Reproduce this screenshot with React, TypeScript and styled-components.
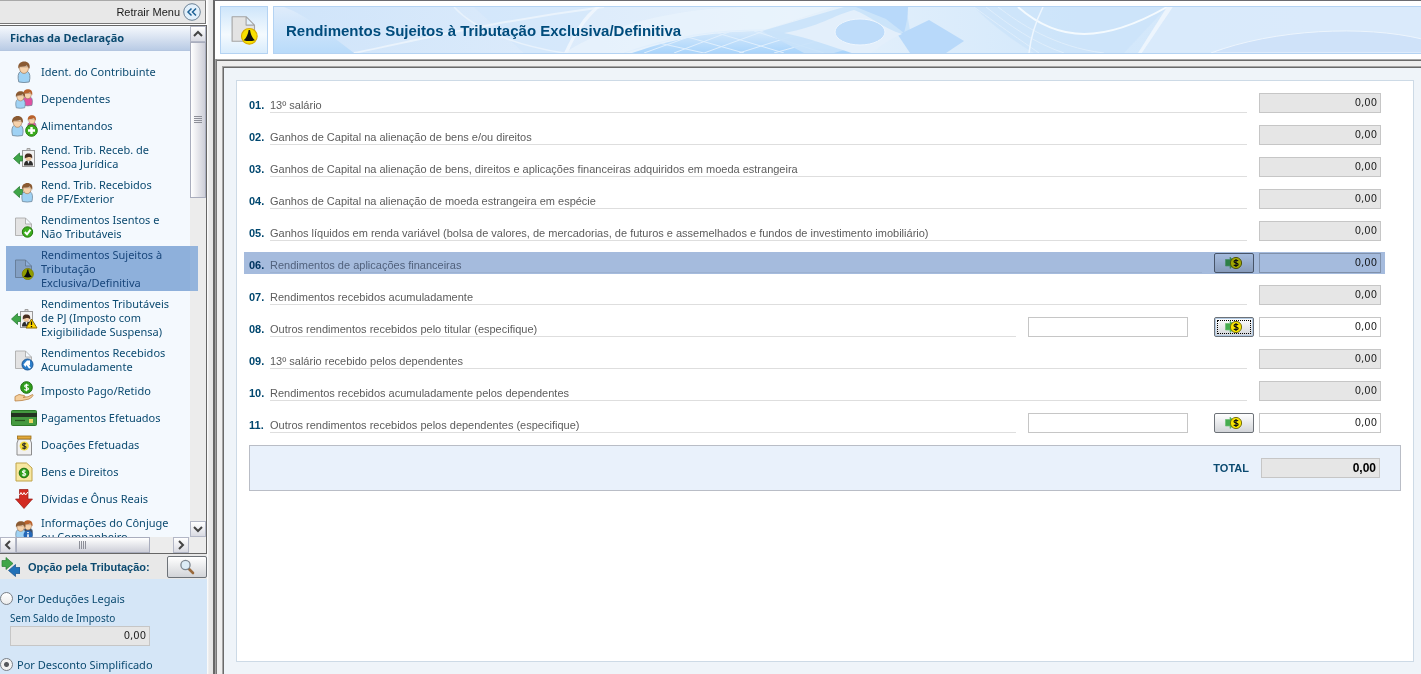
import React, { useState } from "react";
import styled, { createGlobalStyle, css } from "styled-components";

const GlobalStyle = createGlobalStyle`
  * { box-sizing: border-box; }
  body { margin: 0; background: #eeeeee; font-family: "Noto Sans", sans-serif; font-size: 11px; color: #0b4a70; }
  button { padding: 0; font: inherit; cursor: pointer; }
`;

const arial = `"Liberation Sans", Arial, sans-serif`;

/* ---------- shell ---------- */

const Page = styled.div`
  display: flex;
  height: 100vh;
  overflow: hidden;
`;

const Sidebar = styled.aside`
  flex: none;
  width: 207px;
  display: flex;
  flex-direction: column;
  background: #ffffff;
`;

const Splitter = styled.div`
  flex: none;
  width: 6px;
  background: linear-gradient(90deg, #ffffff 0, #e9e9e9 2px, #e4e4e4 100%);
`;

const Main = styled.main`
  flex: 1;
  min-width: 0;
  display: flex;
  flex-direction: column;
  border-top: 1px solid #6b6b70;
  border-left: 2px solid #666666;
  background: #a0a0a0;
`;

/* ---------- sidebar top ---------- */

const TopBar = styled.div`
  flex: none;
  height: 24px;
  margin-right: 1px;
  display: flex;
  align-items: center;
  justify-content: flex-end;
  border: 1px solid #777777;
  border-top-color: #a9a9a9;
  border-left: 0;
  background: #e8e8e8;
`;

const CollapseButton = styled.button`
  display: flex;
  align-items: center;
  gap: 3px;
  padding-right: 4px;
  border: 0;
  background: none;
  color: #1a1a1a;
  font-family: ${arial};
`;

const FormsPanel = styled.section`
  flex: 1;
  min-height: 0;
  margin-top: 1px;
  display: grid;
  grid-template-columns: minmax(0, 1fr) 16px;
  grid-template-rows: minmax(0, 1fr) 16px;
  border-top: 1px solid #666666;
  border-right: 1px solid #666666;
  border-bottom: 1px solid #666666;
  background: #ececec;
`;

const FormsView = styled.nav`
  position: relative;
  z-index: 1;
  overflow-x: visible;
  overflow-y: clip;
  background: #f4f9fe;
`;

const FormsTitle = styled.h2`
  margin: 0;
  height: 25px;
  padding-left: 10px;
  line-height: 24px;
  font-size: 11px;
  font-weight: 700;
  border-bottom: 1px solid #b4c6e0;
  background: linear-gradient(#f6f9fd, #b9cbe5);
`;

const FormsList = styled.ul`
  list-style: none;
  margin: 0;
  padding: 9px 0 0 6px;
  display: flex;
  flex-direction: column;
  gap: 4px;
`;

const FormsLink = styled.a`
  display: flex;
  align-items: center;
  gap: 3px;
  min-height: 20px;
  line-height: 14px;
  color: #0b4a70;
  text-decoration: none;
  white-space: pre-line;
`;

const FormsItem = styled.li<{ $active?: boolean }>`
  position: relative;
  padding: 2px 0 1px 4px;
  ${(p) =>
    p.$active &&
    css`
      ${FormsLink} { color: #2a6490; }
      &::after {
        content: "";
        position: absolute;
        inset: 0 -8px 0 0;
        background: #94b4dc;
        mix-blend-mode: multiply;
        pointer-events: none;
      }
    `}
`;

const IconSlot = styled.span`
  flex: none;
  width: 28px;
  height: 20px;
  display: flex;
  align-items: center;
  justify-content: center;
  svg { flex: none; }
`;

/* ---------- scrollbars ---------- */

const ScrollTrack = styled.div<{ $horizontal?: boolean }>`
  display: flex;
  flex-direction: ${(p) => (p.$horizontal ? "row" : "column")};
  padding-right: ${(p) => (p.$horizontal ? "1px" : "0")};
  background: #ececec;
`;

const ScrollButton = styled.button`
  flex: none;
  width: 16px;
  height: 16px;
  display: grid;
  place-items: center;
  border: 1px solid #b3b7c6;
  background: linear-gradient(#ffffff, #d9dae2);
`;

const ScrollThumb = styled.div<{ $horizontal?: boolean }>`
  flex: ${(p) => (p.$horizontal ? "0 0 71%" : "0 0 156px")};
  display: grid;
  place-items: center;
  border: 1px solid #a9adbd;
  background: linear-gradient(${(p) => (p.$horizontal ? "180deg" : "90deg")}, #ffffff, #cdced8);
`;

const ScrollGap = styled.div`
  flex: 1;
`;

/* ---------- taxation option ---------- */

const TaxHeader = styled.div`
  flex: none;
  height: 25px;
  display: flex;
  align-items: center;
  background: #e8e8e8;
`;

const TaxTitle = styled.h2`
  flex: 1;
  margin: 0;
  padding-left: 8px;
  font-family: ${arial};
  font-size: 11px;
  font-weight: 700;
`;

const ToolButton = styled.button<{ $focused?: boolean }>`
  flex: none;
  width: 40px;
  height: ${(p) => (p.$focused === undefined ? "22px" : "20px")};
  display: grid;
  place-items: center;
  border: 1px solid #6d7278;
  border-radius: 2px;
  background: linear-gradient(#ffffff, #d2d4d8);
  ${(p) =>
    p.$focused &&
    css`
      box-shadow: inset 0 0 0 1px #b4cbe4;
      outline: 1px dotted #000000;
      outline-offset: -4px;
    `}
`;

const TaxBody = styled.div`
  flex: none;
  display: flex;
  flex-direction: column;
  padding: 11px 0 2px;
  background: #d5e6f7;
`;

const RadioRow = styled.label`
  display: flex;
  align-items: center;
  gap: 4px;
  height: 16px;
`;

const Radio = styled.input`
  appearance: none;
  flex: none;
  width: 13px;
  height: 13px;
  margin: 0;
  border: 1px solid #7b8087;
  border-radius: 50%;
  background: linear-gradient(#ffffff, #ececec);
  &:checked {
    background: radial-gradient(circle, #55585c 0 2px, #f2f2f2 3px);
  }
`;

const BalanceField = styled.div`
  display: flex;
  flex-direction: column;
  margin: 5px 0 10px 10px;
  label { height: 15px; line-height: 14px; font-size: 10px; }
`;

/* ---------- form fields ---------- */

const Amount = styled.input<{ $w: number; $total?: boolean; $tint?: boolean }>`
  flex: none;
  width: ${(p) => p.$w}px;
  height: 20px;
  margin: 0;
  padding: 0 3px 1px;
  border: 1px solid #c6c6c6;
  border-radius: 0;
  outline: none;
  background: ${(p) => (p.readOnly && !p.$tint ? "#e6e6e6" : "#ffffff")};
  color: ${(p) => (p.$total ? "#000000" : "#1e1e1e")};
  font-family: "DejaVu Sans", sans-serif;
  font-size: 10px;
  text-align: right;
  ${(p) =>
    p.$total &&
    css`
      font-family: ${arial};
      font-size: 12px;
      font-weight: 700;
    `}
`;

const Describe = styled.input`
  flex: none;
  width: 160px;
  height: 20px;
  margin: 0 14px 0 0;
  padding: 0 3px;
  border: 1px solid #c6c6c6;
  outline: none;
  background: #ffffff;
  font: inherit;
`;

/* ---------- main area ---------- */

const Header = styled.header`
  flex: none;
  display: flex;
  gap: 5px;
  padding: 5px 0 5px 5px;
  background: #ffffff;
`;

const HeaderIcon = styled.div`
  flex: none;
  width: 48px;
  height: 48px;
  display: grid;
  place-items: center;
  border: 1px solid #b4d3f3;
  background: linear-gradient(#cfe6fb, #f4fafe 60%, #d9ecfc);
`;

const Banner = styled.div`
  position: relative;
  flex: 1;
  min-width: 0;
  height: 48px;
  display: flex;
  align-items: center;
  border: 1px solid #b4d3f3;
  border-right: 0;
  overflow: hidden;
`;

const BannerArt = styled.svg`
  position: absolute;
  inset: 0;
  width: 100%;
  height: 100%;
`;

const Title = styled.h1`
  position: relative;
  margin: 0;
  padding-left: 12px;
  color: #004c7c;
  font-family: ${arial};
  font-size: 15px;
  font-weight: 700;
`;

const Frame = styled.div`
  flex: 1;
  min-height: 0;
  display: flex;
  margin-left: 1px;
  padding: 6px 0 0 5px;
  border-left: 1px solid #777777;
  border-top: 1px solid #a5a5a5;
  box-shadow: inset 0 1px 0 #6a6a6a;
  background: #eeeeee;
`;

const Content = styled.div`
  flex: 1;
  min-width: 0;
  display: flex;
  padding: 13px 7px 12px 13px;
  border-left: 1px solid #a5a5a5;
  border-top: 1px solid #a5a5a5;
  box-shadow: inset 1px 1px 0 #6a6a6a;
  background: #eff4f9;
`;

const Card = styled.form`
  flex: 1;
  min-width: 0;
  display: flex;
  flex-direction: column;
  gap: 12px;
  padding: 12px;
  border: 1px solid #cddae6;
  background: #ffffff;
`;

const RowLabel = styled.label`
  flex: 1;
  min-width: 0;
  display: flex;
  line-height: 14px;
  padding-top: 5px;
`;

const RowNumber = styled.strong`
  width: 21px;
  color: #00476f;
`;

const RowText = styled.span`
  flex: 1;
  min-width: 0;
  color: #5c5c5c;
  white-space: nowrap;
  border-bottom: 1px solid #dedede;
`;

const Row = styled.div<{ $highlight?: boolean }>`
  position: relative;
  display: flex;
  gap: 12px;
  height: 20px;
  margin-right: 20px;
  font-family: ${arial};
  ${(p) =>
    p.$highlight &&
    css`
      ${RowText} { color: #7d8590; border-color: #f2f2f2; }
      &::after {
        content: "";
        position: absolute;
        inset: -1px -4px -1px -5px;
        background: #a5bbdd;
        mix-blend-mode: multiply;
        pointer-events: none;
      }
    `}
`;

const RowAmount = styled.div`
  display: flex;
  gap: 5px;
`;

const TotalBar = styled.div`
  display: flex;
  align-items: center;
  justify-content: flex-end;
  gap: 12px;
  height: 46px;
  padding-right: 20px;
  border: 1px solid #b9bdc6;
  background: #e9f1fb;
  font-family: ${arial};
  font-weight: 700;
`;

/* ---------- icons ---------- */

const Person = ({ x = 0, y = 0, body = "#9fd2f4", hair = "#8a5a32", s = 1 }) => (
  <g transform={`translate(${x} ${y}) scale(${s})`}>
    <path d="M1.500 20C.3 15 .8 11.500 3 10L10 10C12.200 11.500 12.700 15 11.500 20Q6.500 21.200 1.500 20Z" fill={body} stroke="#6d8496" strokeWidth="0.8" />
    <path d="M2.200 5.500H10.800C11 9.500 9 11.800 6.500 11.800C4 11.800 2 9.500 2.200 5.500Z" fill="#f6d2ac" stroke="#a37a55" strokeWidth="0.7" />
    <path d="M1.200 7.500C.2 2.500 3.500 .4 6.700 .4C10 .4 12.800 2.500 11.800 7.500C10.800 6.500 10.300 5.200 9.300 4.200C6.500 5.600 3.500 5 2.200 5.600Z" fill={hair} />
  </g>
);

const Sheet = ({ fill = "#e3e3e3" }) => (
  <path d="M1.500 1H11.500L17.500 7V18.500H1.500Z M11.500 1V7H17.500" fill={fill} stroke="#a4a4a4" strokeWidth="0.8" strokeLinejoin="round" />
);

const GreenArrow = ({ x = 0, y = 0 }) => (
  <path transform={`translate(${x} ${y})`} d="M0 5.500L6 0V3H9V8H6V11Z" fill="#3fa648" stroke="#2b7d35" strokeWidth="0.8" />
);

const Dollar = ({ x, y, c = "#ffffff", s = 1 }: { x: number; y: number; c?: string; s?: number }) => (
  <path
    transform={`translate(${x} ${y}) scale(${s})`}
    d="M2.500 -2.500C1.500 -3.600 -2.300 -3.600 -2.300 -1.600C-2.300 .4 2.500 -.5 2.500 1.700C2.500 3.700 -1.700 3.500 -2.600 2.300M0 -4.800V4.800"
    fill="none"
    stroke={c}
    strokeWidth="1.400"
  />
);

const Badge = () => (
  <>
    <path d="M11 4V1.500H14V4" fill="#d5d5d5" stroke="#a0a0a0" />
    <rect x="6.500" y="3.500" width="12" height="16" fill="#f3f3f3" stroke="#9a9a9a" />
    <path d="M8 18.500C8 14.500 10 13.500 12.500 13.500C15 13.500 17 14.500 17 18.500Z" fill="#2d2d2d" />
    <path d="M11.500 14L12.500 17L13.500 14Z" fill="#e6f0fa" />
    <circle cx="12.500" cy="10.500" r="3.200" fill="#f2c9a2" />
    <path d="M8.800 11.500C8.300 6.500 11 6.500 12.500 6.500C15 6.500 16.700 7.500 16.200 11.500C15 9.500 12 9.500 8.800 11.500Z" fill="#4a2f20" />
  </>
);

const Tent = () => (
  <>
    <circle cx="13.800" cy="15" r="5.600" fill="#f8e000" stroke="#d8ab00" strokeWidth="0.8" />
    <path d="M13.300 10.500H14.300C14.700 13.500 15.800 16 17.800 17.800C15 18.600 12.500 18.600 9.800 17.800C11.800 16 12.900 13.500 13.300 10.500Z" fill="#111111" />
  </>
);

const icons: Record<string, React.ReactNode> = {
  person: (
    <svg width="14" height="22" viewBox="0 0 13 21"><Person /></svg>
  ),
  pair: (
    <svg width="18" height="20" viewBox="0 0 18 20">
      <Person x={7.5} y={0} s={0.82} body="#e04fa0" hair="#b9622c" />
      <Person x={0} y={2} s={0.84} />
    </svg>
  ),
  pairPlus: (
    <svg width="27" height="22" viewBox="0 0 27 22">
      <Person x={16} y={0} s={0.75} body="#e04fa0" hair="#b9622c" />
      <Person x={0} y={0.5} s={1} />
      <circle cx="20.500" cy="15.500" r="5.800" fill="#3cae1e" stroke="#23790d" />
      <path d="M20.500 12V19M17 15.500H24" stroke="#ffffff" strokeWidth="2.400" />
    </svg>
  ),
  badge: (
    <svg width="22" height="21" viewBox="-3 0 22 21"><Badge /><GreenArrow x={-2.5} y={6} /></svg>
  ),
  personArrow: (
    <svg width="24" height="21" viewBox="0 0 22 21"><GreenArrow x={0.5} y={4.5} /><Person x={8} y={0.5} s={0.95} /></svg>
  ),
  sheetCheck: (
    <svg width="20" height="21" viewBox="0 0 20 21">
      <Sheet />
      <circle cx="13.500" cy="15" r="5.200" fill="#3cae1e" stroke="#23790d" />
      <path d="M10.800 15L13 17.300L16.500 12.600" fill="none" stroke="#ffffff" strokeWidth="2" />
    </svg>
  ),
  sheetTent: (
    <svg width="20" height="21" viewBox="0 0 20 21"><Sheet /><Tent /></svg>
  ),
  badgeWarn: (
    <svg width="27" height="21" viewBox="-3 0 27 21">
      <Badge />
      <GreenArrow x={-2.5} y={5.5} />
      <path d="M17.500 11L23 20H12Z" fill="#ffd800" stroke="#8a6b00" strokeLinejoin="round" />
      <path d="M17.500 13.500V17M17.500 18V19.300" stroke="#111111" strokeWidth="1.300" />
    </svg>
  ),
  sheetBlue: (
    <svg width="20" height="21" viewBox="0 0 20 21">
      <Sheet />
      <circle cx="13.500" cy="14.500" r="5.500" fill="#2c7fcb" stroke="#1a5594" />
      <path d="M9.500 14.500L13 10.500H16V15.500L14.500 14.500L17 18L15 18.500L12.500 15L11.500 17Z" fill="#ffffff" />
    </svg>
  ),
  handCoin: (
    <svg width="20" height="21" viewBox="0 0 20 21">
      <circle cx="12.500" cy="6.500" r="5.800" fill="#2f9e1c" stroke="#1c6d0e" />
      <Dollar x={12.5} y={6.5} s={0.8} />
      <path d="M1 15.500L5 13.500L10 14.500C12 15 11 16.500 9 16.300L14 15.800L18.500 13.500C20 14 18.500 16 15 18L8 19.500L1 20Z" fill="#f5cf9d" stroke="#b98143" strokeWidth="0.8" />
    </svg>
  ),
  card: (
    <svg width="26" height="16" viewBox="0 0 26 16">
      <rect x="0.500" y="0.500" width="25" height="15" rx="1" fill="#459a40" stroke="#2c7a28" />
      <rect x="0" y="3" width="26" height="4" fill="#23331f" />
      <rect x="18" y="9" width="4" height="4" fill="#e9d661" />
      <path d="M4 10.500H14" stroke="#28571f" strokeWidth="1.200" />
    </svg>
  ),
  jar: (
    <svg width="17" height="21" viewBox="0 0 17 21">
      <path d="M2.500 4L1 8V20H15.500V8L14 4Z" fill="#f1f1f1" stroke="#8c8c8c" />
      <rect x="1.500" y="1" width="13.500" height="3" fill="#e2a93b" stroke="#9c6e17" strokeWidth="0.8" />
      <circle cx="8.200" cy="11" r="4.600" fill="#f1d93c" />
      <Dollar x={8.2} y={11} c="#2b2b2b" s={0.75} />
    </svg>
  ),
  deed: (
    <svg width="18" height="20" viewBox="0 0 18 20">
      <path d="M1 1H11.500L17 6V19H1Z" fill="#f7e7a1" stroke="#bfa348" />
      <circle cx="9" cy="11" r="4.800" fill="#2fa01c" stroke="#1c6d0e" />
      <Dollar x={9} y={11} s={0.72} />
    </svg>
  ),
  debt: (
    <svg width="18" height="20" viewBox="0 0 18 20">
      <path d="M4.500 0.500H13V10H17.500L9 19.500L.5 10H4.500Z" fill="#d22a22" stroke="#961812" strokeWidth="0.700" />
      <path d="M4.500 6L6 3.500L7.500 6L9 3.500L10.500 6L13 3" stroke="#ffffff" fill="none" />
    </svg>
  ),
  couple: (
    <svg width="18" height="20" viewBox="0 0 18 20">
      <Person x={7.5} y={0} s={0.84} body="#3c4c66" hair="#b9622c" />
      <Person x={0} y={1} s={0.88} />
      <circle cx="13" cy="15" r="4.500" fill="#2468b8" />
      <path d="M13 12V13.200M13 14.200V18" stroke="#ffffff" strokeWidth="1.600" />
    </svg>
  ),
};

const CoinIcon = () => (
  <svg width="18" height="14" viewBox="0 0 18 14">
    <path d="M0.500 3.500H5V1L11 7L5 12.500V10H.5Z" fill="#46ad50" stroke="#6fbf74" strokeWidth="0.700" />
    <circle cx="11" cy="7" r="5.600" fill="#f7e400" stroke="#77700f" />
    <Dollar x={11} y={7} c="#111111" s={0.85} />
  </svg>
);

const Chevron = ({ d }: { d: string }) => (
  <svg width="10" height="10" viewBox="0 0 10 10">
    <path d={d} fill="none" stroke="#444444" strokeWidth="2" />
  </svg>
);

const BannerDrawing = () => (
  <BannerArt viewBox="0 0 1148 46" preserveAspectRatio="xMinYMid slice" aria-hidden="true">
    <defs>
      <linearGradient id="sky" x1="0" y1="0" x2="1" y2="0">
        <stop offset="0" stopColor="#cfe4fa" />
        <stop offset="0.250" stopColor="#dcebfb" />
        <stop offset="0.450" stopColor="#e6f1fb" />
        <stop offset="0.700" stopColor="#d3e8fb" />
        <stop offset="1" stopColor="#d6e7fa" />
      </linearGradient>
      <linearGradient id="deep" x1="0" y1="1" x2="0" y2="0">
        <stop offset="0" stopColor="#b9dbfa" />
        <stop offset="1" stopColor="#dfecfb" />
      </linearGradient>
      <linearGradient id="dome" x1="0" y1="1" x2="0" y2="0">
        <stop offset="0" stopColor="#a9d4fb" />
        <stop offset="1" stopColor="#d6e9fb" />
      </linearGradient>
    </defs>
    <rect width="1148" height="46" fill="url(#sky)" />
    <path d="M0 46V0H10C36 10 56 28 80 46Z" fill="url(#deep)" />
    <path d="M200 0H320L290 46H250Z" fill="#cfe6fb" opacity="0.500" />
    <path d="M80 46C140 34 220 14 330 0" fill="none" stroke="#eaf3fc" strokeWidth="2" />
    <path d="M180 0C200 22 240 38 290 46" fill="none" stroke="#e8f2fc" strokeWidth="1.500" />
    <path d="M290 46C300 25 310 8 322 0H326C312 12 300 30 294 46Z" fill="#f2f8fe" opacity="0.800" />
    <path d="M290 46C330 20 400 0 480 0H560L420 46Z" fill="#eaf3fc" opacity="0.700" />
    <path d="M358 46C410 28 450 24 495 24C530 24 560 36 580 46Z" fill="url(#dome)" />
    <path
      d="M350 46C410 26 450 23 495 23C535 23 562 36 582 46M370 46L420 28M400 46L455 25M430 46L490 24M465 46L525 27M500 46L550 32M385 36L430 46M410 29L470 46M440 25L510 46M480 24L550 46"
      fill="none"
      stroke="#e0effd"
      strokeWidth="1"
    />
    <path d="M488 24L570 0H632L636 24L560 46H530Z" fill="#c9e2fa" opacity="0.900" />
    <path d="M582 0H634C634 10 632 18 630 26L612 12Z" fill="#b8d9fa" />
    <path d="M624 28L655 13L690 34L672 46H636Z" fill="#b8d9fa" />
    <path d="M510 26C545 20 560 8 580 3C595 8 610 22 628 27C610 34 600 46 590 50C570 44 540 32 510 26Z" fill="#e3effb" />
    <ellipse cx="586" cy="25" rx="25" ry="13" fill="#bedcfa" stroke="#eef6fe" strokeWidth="1" />
    <path d="M700 0C720 20 740 34 760 46H850L893 0Z" fill="#cbe2fa" opacity="0.700" />
    <path d="M700 0C730 22 745 32 765 46M712 0C735 18 760 36 790 46M724 0C745 16 780 40 830 46" fill="none" stroke="#dfeefc" />
    <path d="M744 0C785 36 830 36 893 0" fill="none" stroke="#f4fafe" strokeWidth="2" />
    <path d="M755 46C757 28 762 14 769 0" fill="none" stroke="#eef6fe" strokeWidth="1.500" />
    <path d="M864 46L893 0H899L868 46Z" fill="#edf5fd" />
    <path d="M868 46L899 0H1148V46Z" fill="#dcebfb" opacity="0.700" />
    <path d="M937 46C1000 22 1090 18 1148 32V46Z" fill="#cfe2f9" stroke="#edf5fd" />
  </BannerArt>
);

/* ---------- data ---------- */

const forms: { icon: string; label: string; active?: boolean }[] = [
  { icon: "person", label: "Ident. do Contribuinte" },
  { icon: "pair", label: "Dependentes" },
  { icon: "pairPlus", label: "Alimentandos" },
  { icon: "badge", label: "Rend. Trib. Receb. de\nPessoa Jurídica" },
  { icon: "personArrow", label: "Rend. Trib. Recebidos\nde PF/Exterior" },
  { icon: "sheetCheck", label: "Rendimentos Isentos e\nNão Tributáveis" },
  { icon: "sheetTent", label: "Rendimentos Sujeitos à\nTributação\nExclusiva/Definitiva", active: true },
  { icon: "badgeWarn", label: "Rendimentos Tributáveis\nde PJ (Imposto com\nExigibilidade Suspensa)" },
  { icon: "sheetBlue", label: "Rendimentos Recebidos\nAcumuladamente" },
  { icon: "handCoin", label: "Imposto Pago/Retido" },
  { icon: "card", label: "Pagamentos Efetuados" },
  { icon: "jar", label: "Doações Efetuadas" },
  { icon: "deed", label: "Bens e Direitos" },
  { icon: "debt", label: "Dívidas e Ônus Reais" },
  { icon: "couple", label: "Informações do Cônjuge\nou Companheiro" },
];

type Line = { text: string; detail?: boolean; describe?: boolean; highlight?: boolean; focused?: boolean };

const lines: Line[] = [
  { text: "13º salário" },
  { text: "Ganhos de Capital na alienação de bens e/ou direitos" },
  { text: "Ganhos de Capital na alienação de bens, direitos e aplicações financeiras adquiridos em moeda estrangeira" },
  { text: "Ganhos de Capital na alienação de moeda estrangeira em espécie" },
  { text: "Ganhos líquidos em renda variável (bolsa de valores, de mercadorias, de futuros e assemelhados e fundos de investimento imobiliário)" },
  { text: "Rendimentos de aplicações financeiras", detail: true, highlight: true },
  { text: "Rendimentos recebidos acumuladamente" },
  { text: "Outros rendimentos recebidos pelo titular (especifique)", detail: true, describe: true, focused: true },
  { text: "13º salário recebido pelos dependentes" },
  { text: "Rendimentos recebidos acumuladamente pelos dependentes" },
  { text: "Outros rendimentos recebidos pelos dependentes (especifique)", detail: true, describe: true },
];

const IncomeRow = ({ line, index }: { line: Line; index: number }) => {
  const id = `linha-${index + 1}`;
  return (
    <Row $highlight={line.highlight}>
      <RowLabel htmlFor={id}>
        <RowNumber>{String(index + 1).padStart(2, "0")}.</RowNumber>
        <RowText>{line.text}</RowText>
      </RowLabel>
      {line.describe && <Describe type="text" aria-label={line.text} />}
      <RowAmount>
        {line.detail && (
          <ToolButton type="button" $focused={!!line.focused} aria-label="Detalhar">
            <CoinIcon />
          </ToolButton>
        )}
        <Amount id={id} $w={122} $tint={line.highlight} defaultValue="0,00" readOnly={!line.describe} />
      </RowAmount>
    </Row>
  );
};

export default function App() {
  const [option, setOption] = useState("simplificado");
  return (
    <>
      <GlobalStyle />
      <Page>
        <Sidebar>
          <TopBar>
            <CollapseButton type="button">
              Retrair Menu
              <svg width="18" height="18" viewBox="0 0 18 18">
                <circle cx="9" cy="9" r="8.300" fill="#e2f0fb" stroke="#6c8296" />
                <path d="M8.500 5.500L5 9L8.500 12.500M13 5.500L9.500 9L13 12.500" fill="none" stroke="#1f6296" strokeWidth="1.500" />
              </svg>
            </CollapseButton>
          </TopBar>
          <FormsPanel>
            <FormsView>
              <FormsTitle>Fichas da Declaração</FormsTitle>
              <FormsList>
                {forms.map((f) => (
                  <FormsItem key={f.icon} $active={f.active}>
                    <FormsLink href="#">
                      <IconSlot>{icons[f.icon]}</IconSlot>
                      {f.label}
                    </FormsLink>
                  </FormsItem>
                ))}
              </FormsList>
            </FormsView>
            <ScrollTrack>
              <ScrollButton type="button" aria-label="Rolar para cima">
                <Chevron d="M1 7L5 3L9 7" />
              </ScrollButton>
              <ScrollThumb>
                <svg width="8" height="8" viewBox="0 0 8 8">
                  <path d="M0 .5H8M0 2.500H8M0 4.500H8M0 6.500H8" stroke="#8d8f98" />
                </svg>
              </ScrollThumb>
              <ScrollGap />
              <ScrollButton type="button" aria-label="Rolar para baixo">
                <Chevron d="M1 3L5 7L9 3" />
              </ScrollButton>
            </ScrollTrack>
            <ScrollTrack $horizontal>
              <ScrollButton type="button" aria-label="Rolar para a esquerda">
                <Chevron d="M7 1L3 5L7 9" />
              </ScrollButton>
              <ScrollThumb $horizontal>
                <svg width="8" height="8" viewBox="0 0 8 8">
                  <path d="M.5 0V8M2.500 0V8M4.500 0V8M6.500 0V8" stroke="#8d8f98" />
                </svg>
              </ScrollThumb>
              <ScrollGap />
              <ScrollButton type="button" aria-label="Rolar para a direita">
                <Chevron d="M3 1L7 5L3 9" />
              </ScrollButton>
            </ScrollTrack>
          </FormsPanel>
          <TaxHeader>
            <svg width="20" height="20" viewBox="0 0 20 20">
              <path d="M2 3.500H6V0.500L13 6.500L6 12.500V9.500H2Z" fill="#3fa648" stroke="#2b7d35" strokeWidth="0.700" />
              <path d="M20 10.500H15.500V7.500L8.500 13.500L15.500 19.500V16.500H20Z" fill="#2271b8" stroke="#154f86" strokeWidth="0.700" />
            </svg>
            <TaxTitle>Opção pela Tributação:</TaxTitle>
            <ToolButton type="button" aria-label="Comparar opções">
              <svg width="16" height="16" viewBox="0 0 16 16">
                <path d="M9.500 9.500L14 14" stroke="#9a6a3c" strokeWidth="2.600" strokeLinecap="round" />
                <circle cx="6.500" cy="6" r="4.600" fill="#dcecf6" stroke="#7d8790" strokeWidth="1.300" />
              </svg>
            </ToolButton>
          </TaxHeader>
          <TaxBody>
            <RadioRow>
              <Radio type="radio" name="opcao" checked={option === "legais"} onChange={() => setOption("legais")} />
              Por Deduções Legais
            </RadioRow>
            <BalanceField>
              <label htmlFor="saldo">Sem Saldo de Imposto</label>
              <Amount id="saldo" $w={140} defaultValue="0,00" readOnly />
            </BalanceField>
            <RadioRow>
              <Radio type="radio" name="opcao" checked={option === "simplificado"} onChange={() => setOption("simplificado")} />
              Por Desconto Simplificado
            </RadioRow>
          </TaxBody>
        </Sidebar>
        <Splitter />
        <Main>
          <Header>
            <HeaderIcon>
              <svg width="28" height="30" viewBox="0 0 20 21"><Sheet /><Tent /></svg>
            </HeaderIcon>
            <Banner>
              <BannerDrawing />
              <Title>Rendimentos Sujeitos à Tributação Exclusiva/Definitiva</Title>
            </Banner>
          </Header>
          <Frame>
            <Content>
              <Card>
                {lines.map((line, i) => (
                  <IncomeRow key={line.text} line={line} index={i} />
                ))}
                <TotalBar>
                  <label htmlFor="total">TOTAL</label>
                  <Amount id="total" $w={119} $total defaultValue="0,00" readOnly />
                </TotalBar>
              </Card>
            </Content>
          </Frame>
        </Main>
      </Page>
    </>
  );
}
